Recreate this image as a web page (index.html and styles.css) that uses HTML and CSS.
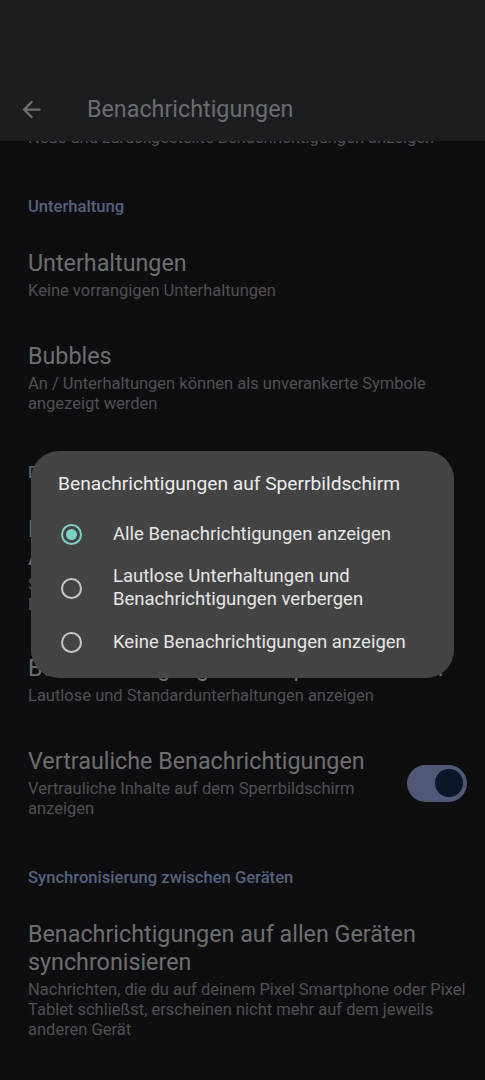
FILE: index.html
```html
<!DOCTYPE html>
<html lang="de">
<head>
    <meta charset="UTF-8">
    <meta name="viewport" content="width=device-width, initial-scale=1.0">
    <title>Benachrichtigungen</title>
    <link rel="stylesheet" href="styles.css">
</head>
<body>
    <div class="screen">
        <header class="appbar">
            <div class="appbar-row">
                <svg class="back" viewBox="0 0 24 24"><path d="M20 11H7.83l5.59-5.59L12 4l-8 8 8 8 1.41-1.41L7.83 13H20v-2z"/></svg>
                <h1 class="appbar-title">Benachrichtigungen</h1>
            </div>
        </header>

        <main class="list">
            <div class="item">
                <div class="item-title">Benachrichtigungsverlauf</div>
                <div class="item-sub">Neue und zurückgestellte Benachrichtigungen anzeigen</div>
            </div>

            <h2 class="section">Unterhaltung</h2>
            <div class="item">
                <div class="item-title">Unterhaltungen</div>
                <div class="item-sub">Keine vorrangigen Unterhaltungen</div>
            </div>
            <div class="item">
                <div class="item-title">Bubbles</div>
                <div class="item-sub">An / Unterhaltungen können als unverankerte Symbole angezeigt werden</div>
            </div>

            <h2 class="section">Datenschutz</h2>
            <div class="item item-tight">
                <div class="item-title">Benachrichtigungen für Geräte und Apps Verwalten</div>
                <div class="item-sub">Steuern, welche Apps und Geräte Benachrichtigungen lesen können</div>
            </div>
            <div class="item">
                <div class="item-title">Benachrichtigungen auf Sperrbildschirm</div>
                <div class="item-sub">Lautlose und Standardunterhaltungen anzeigen</div>
            </div>
            <div class="item item-switch">
                <div class="item-text">
                    <div class="item-title">Vertrauliche Benachrichtigungen</div>
                    <div class="item-sub">Vertrauliche Inhalte auf dem Sperrbildschirm anzeigen</div>
                </div>
                <div class="toggle"><span class="thumb"></span></div>
            </div>

            <h2 class="section">Synchronisierung zwischen Geräten</h2>
            <div class="item">
                <div class="item-title">Benachrichtigungen auf allen Geräten synchronisieren</div>
                <div class="item-sub">Nachrichten, die du auf deinem Pixel Smartphone oder Pixel Tablet schließst, erscheinen nicht mehr auf dem jeweils anderen Gerät</div>
            </div>
        </main>

        <div class="dialog">
            <div class="dialog-title">Benachrichtigungen auf Sperrbildschirm</div>
            <div class="option">
                <span class="radio checked"></span>
                <span class="option-text">Alle Benachrichtigungen anzeigen</span>
            </div>
            <div class="option">
                <span class="radio"></span>
                <span class="option-text">Lautlose Unterhaltungen und Benachrichtigungen verbergen</span>
            </div>
            <div class="option">
                <span class="radio"></span>
                <span class="option-text">Keine Benachrichtigungen anzeigen</span>
            </div>
        </div>
    </div>
</body>
</html>
```

FILE: styles.css
```css
* {
    box-sizing: border-box;
}
body {
    margin: 0;
    background: #0e0e10;
    font-family: Roboto, "Liberation Sans", sans-serif;
}
.screen {
    position: relative;
    width: 485px;
    height: 1080px;
    overflow: hidden;
}
.appbar {
    position: absolute;
    top: 0;
    left: 0;
    right: 0;
    height: 141px;
    padding-top: 82px;
    background: #1c1d21;
    z-index: 1;
}
.appbar-row {
    display: flex;
    align-items: center;
    height: 54px;
}
.back {
    width: 27px;
    height: 27px;
    margin-left: 18px;
    fill: #6f6f72;
}
.appbar-title {
    margin: 0 0 0 42px;
    font-size: 23.3px;
    line-height: 28px;
    font-weight: 400;
    color: #6c6c6f;
}
.list {
    padding-top: 75px;
}
.section {
    margin: 0;
    padding: 29px 16px 11px 28px;
    font-size: 16.6px;
    line-height: 20px;
    font-weight: 500;
    color: #55617f;
}
.item {
    padding: 21px 16px 20px 28px;
}
.item-tight {
    padding-right: 40px;
    padding-bottom: 18px;
}
.item-title {
    font-size: 23.3px;
    line-height: 28px;
    color: #6e6e71;
}
.item-sub {
    margin-top: 4px;
    font-size: 16.5px;
    line-height: 20px;
    color: #505053;
}
.item-switch {
    display: flex;
    align-items: center;
    gap: 17px;
    padding-right: 18px;
}
.item-text {
    flex: 1;
}
.toggle {
    display: flex;
    justify-content: flex-end;
    align-items: center;
    width: 60px;
    height: 37px;
    padding: 0 4px;
    border-radius: 19px;
    background: #4f5875;
}
.thumb {
    width: 28px;
    height: 28px;
    border-radius: 50%;
    background: #0c1628;
}
.dialog {
    position: absolute;
    top: 451px;
    left: 31px;
    width: 423px;
    padding: 21px 0 9px;
    border-radius: 28px;
    background: #444444;
    z-index: 2;
}
.dialog-title {
    padding: 0 20px 0 27px;
    margin-bottom: 11px;
    font-size: 19.2px;
    line-height: 24px;
    color: #ececec;
}
.option {
    display: flex;
    align-items: center;
    gap: 31px;
    min-height: 54px;
    padding: 0 24px 0 30px;
}
.radio {
    position: relative;
    flex: none;
    width: 21px;
    height: 21px;
    border: 2px solid #c6c6c6;
    border-radius: 50%;
}
.radio.checked {
    border-color: #7fcfc3;
}
.radio.checked::after {
    content: "";
    position: absolute;
    top: 3px;
    left: 3px;
    width: 11px;
    height: 11px;
    border-radius: 50%;
    background: #7fcfc3;
}
.option-text {
    font-size: 18.5px;
    line-height: 23px;
    color: #e6e6e6;
}
```
